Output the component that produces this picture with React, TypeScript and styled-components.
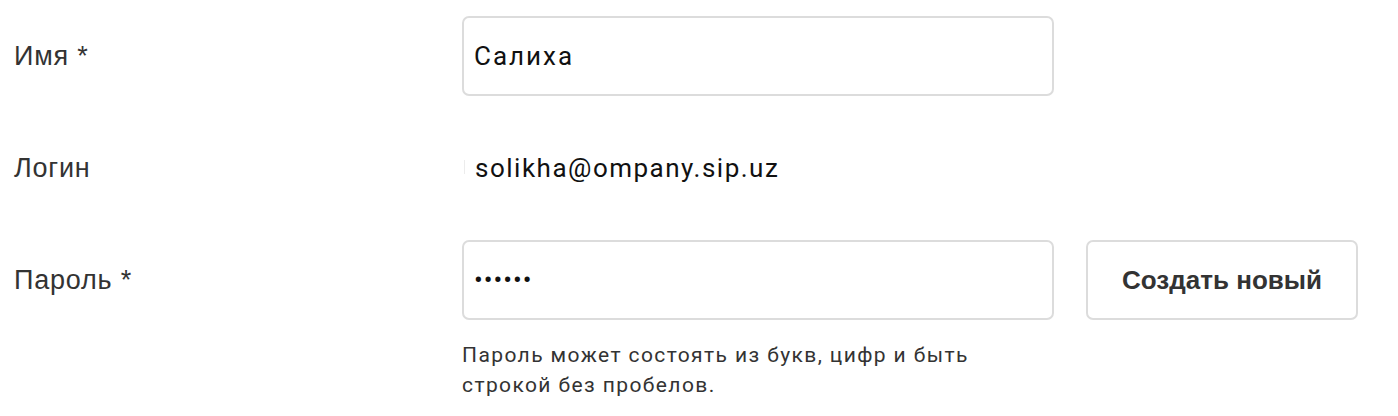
import React from "react";
import styled, { createGlobalStyle } from "styled-components";

const Global = createGlobalStyle`
  html, body { margin: 0; padding: 0; background: #fff; }
  body { font-family: "Liberation Sans", Arial, sans-serif; }
`;

const Form = styled.div`
  display: flex;
  flex-direction: column;
  gap: 32px;
  padding: 16px 0 0 14px;
`;

const Row = styled.div`
  display: grid;
  grid-template-columns: 416px 592px auto;
  column-gap: 32px;
  align-items: start;
`;

const Label = styled.div`
  height: 80px;
  display: flex;
  align-items: center;
  font-family: "Liberation Sans", Arial, sans-serif;
  font-size: 27px;
  letter-spacing: 0.8px;
  color: #333;
`;

const Field = styled.div`
  display: flex;
  flex-direction: column;
`;

const Input = styled.input<{ $spacing: number }>`
  box-sizing: border-box;
  width: 592px;
  height: 80px;
  border: 2px solid #dcdcdc;
  border-radius: 7px;
  padding: 0 10px;
  font-family: Roboto, "Noto Sans", sans-serif;
  font-size: 26px;
  letter-spacing: ${(p) => p.$spacing}px;
  color: #111;
  background: #fff;
  outline: none;
`;

const Static = styled.div`
  position: relative;
  height: 80px;
  display: flex;
  align-items: center;
  padding-left: 13px;
  font-family: Roboto, "Noto Sans", sans-serif;
  font-size: 26px;
  letter-spacing: 1.5px;
  color: #111;
`;

const Caret = styled.span`
  position: absolute;
  left: 2px;
  top: 32px;
  width: 1px;
  height: 14px;
  background: #ececec;
`;

const Hint = styled.div`
  margin-top: 20px;
  width: 580px;
  font-family: Roboto, "Noto Sans", sans-serif;
  font-size: 21px;
  letter-spacing: 1.4px;
  line-height: 30px;
  color: #333;
`;

const Button = styled.button`
  box-sizing: border-box;
  width: 272px;
  height: 80px;
  border: 2px solid #dcdcdc;
  border-radius: 7px;
  background: #fff;
  font-family: "Liberation Sans", Arial, sans-serif;
  font-weight: bold;
  font-size: 26px;
  color: #333;
  cursor: pointer;
`;

export default function App() {
  return (
    <>
      <Global />
      <Form>
        <Row>
          <Label>Имя *</Label>
          <Input $spacing={2} defaultValue="Салиха" />
        </Row>
        <Row>
          <Label>Логин</Label>
          <Static>
            <Caret />
            solikha@ompany.sip.uz
          </Static>
        </Row>
        <Row>
          <Label>Пароль *</Label>
          <Field>
            <Input $spacing={1} type="password" defaultValue="123456" readOnly />
            <Hint>
              Пароль может состоять из букв, цифр и быть
              <br />
              строкой без пробелов.
            </Hint>
          </Field>
          <Button>Создать новый</Button>
        </Row>
      </Form>
    </>
  );
}
